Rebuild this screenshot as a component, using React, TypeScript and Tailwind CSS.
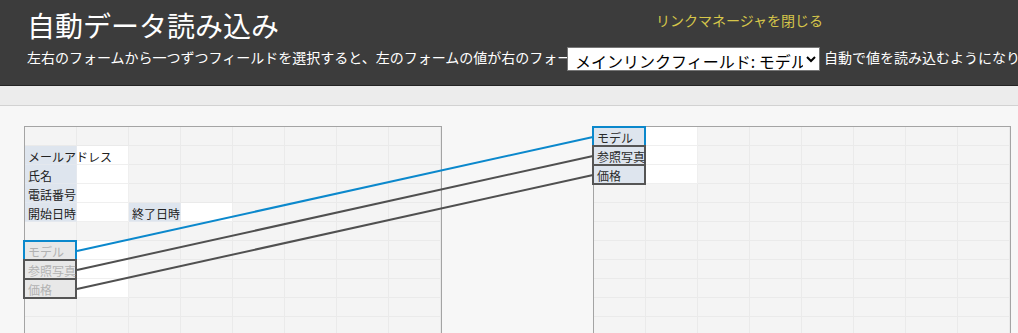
type Cell = {
  kind: 'label' | 'input' | 'link';
  text?: string;
  edge?: 'blue' | 'gray';
  muted?: boolean;
};

const leftCells: Record<string, Cell> = {
  '1-0': { kind: 'label', text: 'メールアドレス' },
  '1-1': { kind: 'input' },
  '2-0': { kind: 'label', text: '氏名' },
  '2-1': { kind: 'input' },
  '3-0': { kind: 'label', text: '電話番号' },
  '3-1': { kind: 'input' },
  '4-0': { kind: 'label', text: '開始日時' },
  '4-1': { kind: 'input' },
  '4-2': { kind: 'label', text: '終了日時' },
  '4-3': { kind: 'input' },
  '6-0': { kind: 'link', text: 'モデル', edge: 'blue', muted: true },
  '6-1': { kind: 'input' },
  '7-0': { kind: 'link', text: '参照写真', edge: 'gray', muted: true },
  '7-1': { kind: 'input' },
  '8-0': { kind: 'link', text: '価格', edge: 'gray', muted: true },
  '8-1': { kind: 'input' },
};

const rightCells: Record<string, Cell> = {
  '0-0': { kind: 'link', text: 'モデル', edge: 'blue' },
  '0-1': { kind: 'input' },
  '1-0': { kind: 'link', text: '参照写真', edge: 'gray' },
  '1-1': { kind: 'input' },
  '2-0': { kind: 'link', text: '価格', edge: 'gray' },
  '2-1': { kind: 'input' },
};

// wires drawn between the linked fields
const links = [
  { x1: 77, y1: 251, x2: 593, y2: 137, color: '#0b88cc' },
  { x1: 77, y1: 270, x2: 593, y2: 156, color: '#505050' },
  { x1: 77, y1: 289, x2: 593, y2: 175, color: '#505050' },
];

function GridCell({ cell }: { cell?: Cell }) {
  if (!cell) {
    return <div className="border-r border-b border-[#eaeaea]" />;
  }
  if (cell.kind === 'input') {
    return <div className="border-r border-b border-[#efefef] bg-white" />;
  }
  if (cell.kind === 'label') {
    return (
      <div className="border-r border-b border-[#e4e8ee] bg-[#dee5ee]">
        <span className="relative z-10 block whitespace-nowrap pl-[3px] pt-[2px] text-[12px] leading-[17px] text-[#222]">
          {cell.text}
        </span>
      </div>
    );
  }
  return (
    <div className={`relative ${cell.muted ? 'bg-[#e8e8e8]' : 'bg-[#dee5ee]'}`}>
      <div
        className={`absolute -top-px -bottom-px -left-[2px] right-0 z-[5] border-2 ${
          cell.edge === 'blue' ? 'border-[#0b88cc]' : 'border-[#555555]'
        }`}
      />
      <span
        className={`relative z-10 block whitespace-nowrap pl-[3px] pt-[2px] text-[12px] leading-[17px] ${
          cell.muted ? 'text-[#b2b2b2]' : 'text-[#2a2a2a]'
        }`}
      >
        {cell.text}
      </span>
    </div>
  );
}

function FormPanel({ cells }: { cells: Record<string, Cell> }) {
  const keys: string[] = [];
  for (let r = 0; r < 12; r++) {
    for (let c = 0; c < 8; c++) keys.push(`${r}-${c}`);
  }
  return (
    <div className="shrink-0 border border-[#a4a4a4] bg-[#f4f4f4]">
      <div className="grid grid-cols-[repeat(8,52px)] auto-rows-[19px]">
        {keys.map((k) => (
          <GridCell key={k} cell={cells[k]} />
        ))}
      </div>
    </div>
  );
}

export default function App() {
  return (
    <div className="relative h-screen overflow-hidden bg-[#f7f7f7] font-['Noto_Sans_CJK_JP','Noto_Sans',sans-serif]">
      <header className="h-[86px] border-b border-[#242424] bg-[#3c3c3c] pl-[27px] pt-[5px]">
        <div className="flex items-start">
          <h1 className="w-[629px] shrink-0 text-[28px] leading-[40px] font-normal text-white">
            自動データ読み込み
          </h1>
          <a className="mt-[5px] whitespace-nowrap text-[14px] leading-[20px] text-[#d6c64a]">
            リンクマネージャを閉じる
          </a>
        </div>
        <div className="mt-[2px] flex h-[24px] items-start whitespace-nowrap text-[14px] leading-[20px] text-white">
          <span className="w-[540px] shrink-0 overflow-hidden">
            左右のフォームから一つずつフィールドを選択すると、左のフォームの値が右のフォームに
          </span>
          <select
            defaultValue="model"
            className="h-[24px] w-[253px] shrink-0 border border-[#767676] bg-white pl-[3px] text-[16px] leading-[22px] text-black"
          >
            <option value="model">メインリンクフィールド: モデル</option>
            <option value="photo">メインリンクフィールド: 参照写真</option>
            <option value="price">メインリンクフィールド: 価格</option>
          </select>
          <span className="ml-[4px] shrink-0">自動で値を読み込むようになります。</span>
        </div>
      </header>
      <div className="h-[20px] border-b border-[#d2d2d2] bg-[#ececec]" />
      <main className="flex items-start pl-[24px] pt-[20px]">
        <FormPanel cells={leftCells} />
        <div className="ml-[151px]">
          <FormPanel cells={rightCells} />
        </div>
      </main>
      <svg
        className="pointer-events-none absolute left-0 top-0 z-20"
        width="1018"
        height="333"
        viewBox="0 0 1018 333"
      >
        {links.map((l, i) => (
          <line key={i} x1={l.x1} y1={l.y1} x2={l.x2} y2={l.y2} stroke={l.color} strokeWidth="2" />
        ))}
      </svg>
    </div>
  );
}
